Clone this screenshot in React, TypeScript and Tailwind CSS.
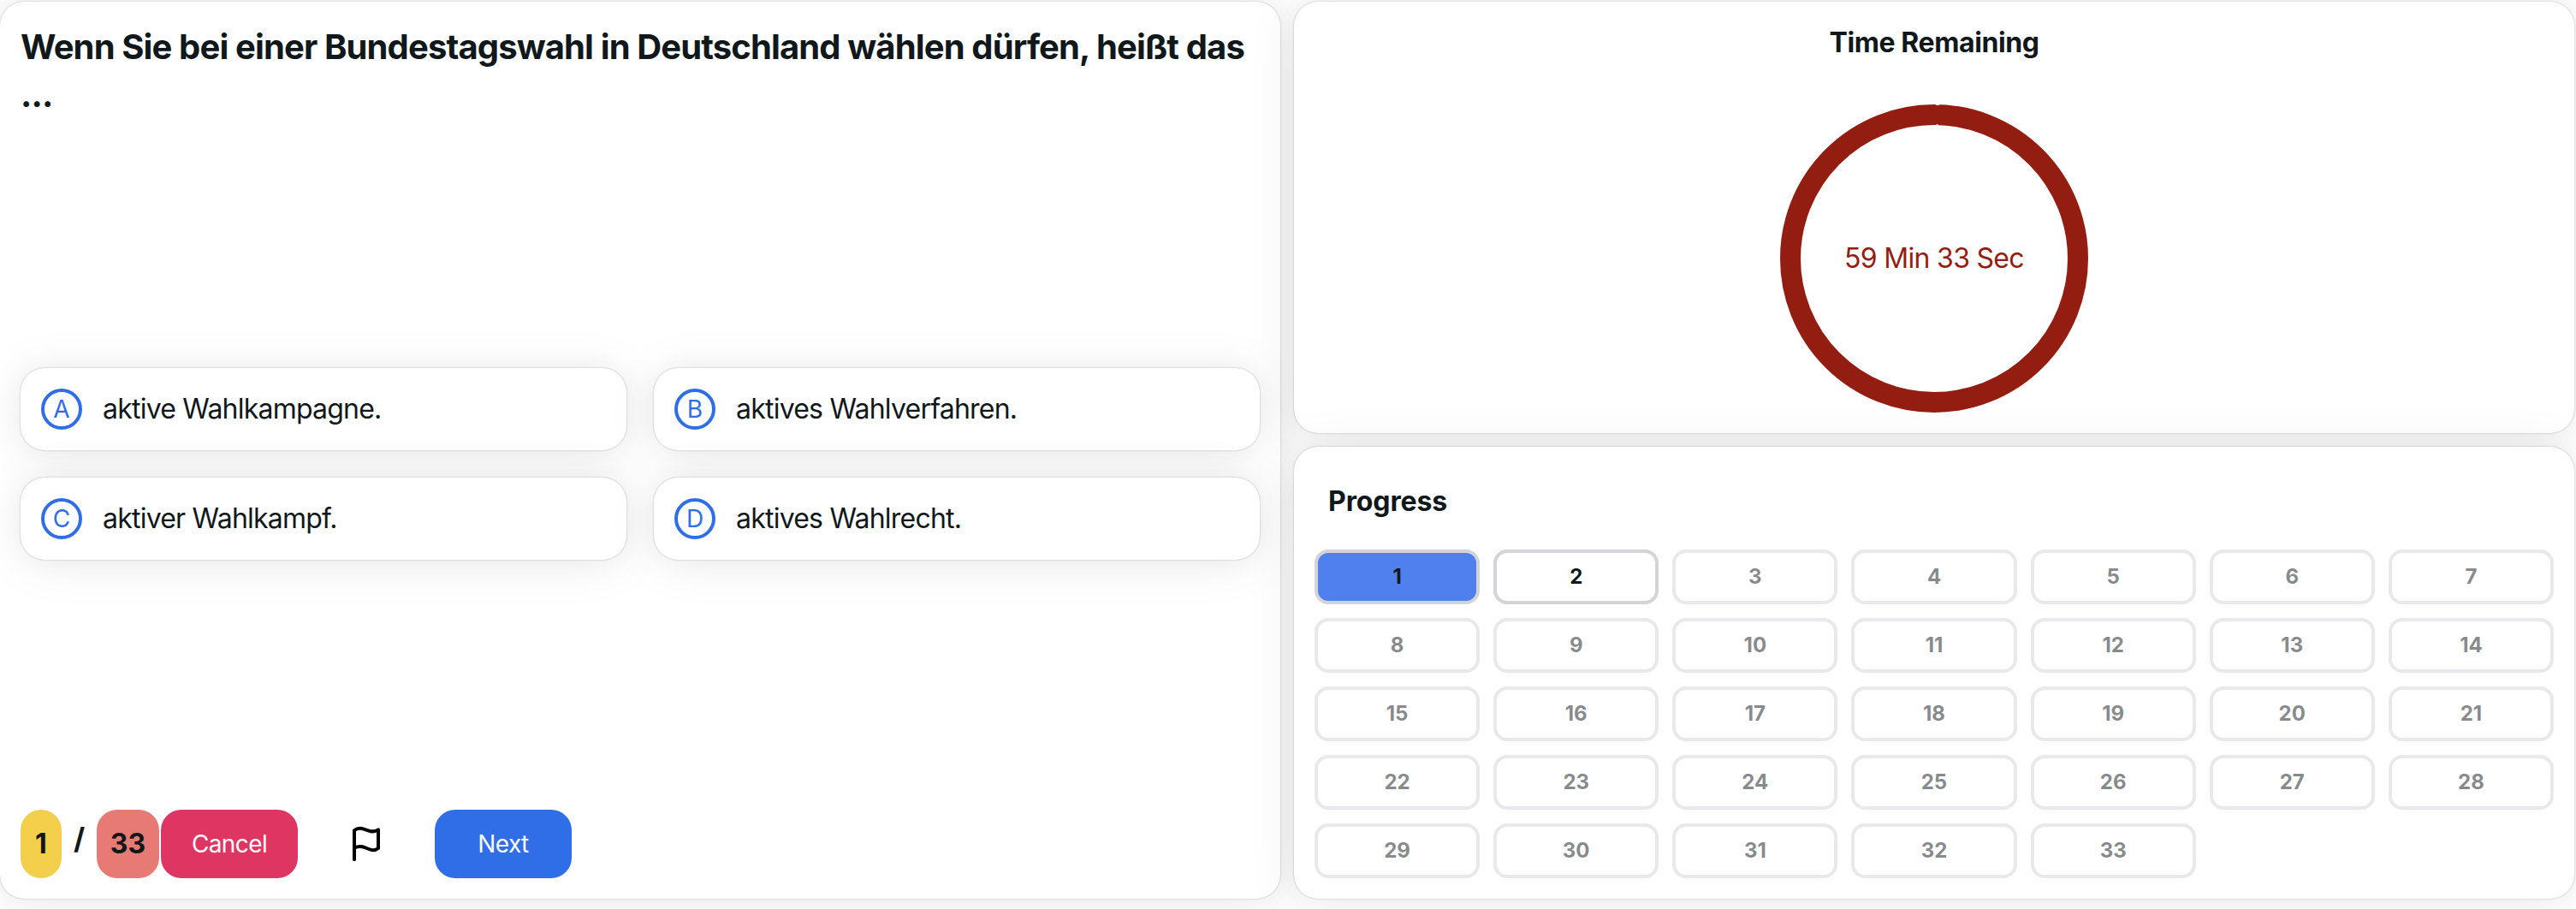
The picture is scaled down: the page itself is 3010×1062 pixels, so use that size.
import React from "react";

const CARD =
  "rounded-[28px] bg-white shadow-[0_0_30px_0_rgb(0_0_0/0.03),0_4px_60px_0_rgb(0_0_0/0.08),0_0_2px_0_rgb(0_0_0/0.3)]";

const answers = [
  { key: "A", text: "aktive Wahlkampagne." },
  { key: "B", text: "aktives Wahlverfahren." },
  { key: "C", text: "aktiver Wahlkampf." },
  { key: "D", text: "aktives Wahlrecht." },
];

const questions = Array.from({ length: 33 }, (_, i) => i + 1);

function Answer({ label, text }: { label: string; text: string }) {
  return (
    <button className={`${CARD} flex h-24 items-center gap-6 px-6 text-left`}>
      <span className="flex size-12 shrink-0 items-center justify-center rounded-full border-4 border-[#2f6ee7] text-[28px] leading-none text-[#2f6ee7]">
        {label}
      </span>
      <span className="text-[32px] leading-12 tracking-[-0.78px]">{text}</span>
    </button>
  );
}

function FlagIcon() {
  return (
    <svg
      viewBox="0 0 48 48"
      className="size-12"
      fill="none"
      stroke="#000"
      strokeWidth="4"
      strokeLinecap="round"
      strokeLinejoin="round"
    >
      <path d="M10 42.3V8C13 5.8 17 5.2 21 6.6L27 8.6C31 10 34.5 9.6 38 7.3V29C35 31.5 31 31.8 27 30L22 28C18 26.6 14 26.8 10 28.7" />
    </svg>
  );
}

function QuestionPanel() {
  return (
    <section className={`${CARD} flex h-[1048px] flex-col p-6`}>
      <h1 className="mt-px mb-[3px] h-[400px] text-[40px] leading-[56px] font-bold tracking-[-0.87px] whitespace-nowrap">
        Wenn Sie bei einer Bundestagswahl in Deutschland wählen dürfen, heißt das
        <br />
        ...
      </h1>
      <div className="grid grid-cols-2 gap-8">
        {answers.map((a) => (
          <Answer key={a.key} label={a.key} text={a.text} />
        ))}
      </div>
      <div className="mt-auto flex h-20 items-center">
        <div className="flex h-20 w-12 items-center justify-center rounded-3xl bg-[#f3cf4b] text-[32px] font-bold">
          1
        </div>
        <div className="flex h-20 w-[41px] justify-center pt-3 text-[34px] leading-11 font-bold">
          /
        </div>
        <div className="flex h-20 w-[73px] items-center justify-center rounded-3xl bg-[#e77a74] text-[32px] font-bold">
          33
        </div>
        <button className="ml-0.5 h-20 w-40 rounded-3xl bg-[#df3562] text-[28px] tracking-[-0.6px] text-white">
          Cancel
        </button>
        <button className="flex h-20 w-40 items-center justify-center">
          <FlagIcon />
        </button>
        <button className="h-20 w-40 rounded-3xl bg-[#2f6ee7] text-[28px] tracking-[-0.6px] text-white">
          Next
        </button>
      </div>
    </section>
  );
}

function TimerPanel() {
  return (
    <section className={`${CARD} flex h-[504px] flex-col items-center pt-6`}>
      <h2 className="text-[32px] leading-12 font-bold tracking-[-0.4px]">Time Remaining</h2>
      <div className="mt-12 grid size-[360px] place-items-center">
        <svg viewBox="0 0 360 360" className="col-start-1 row-start-1 size-[360px]">
          <circle cx="180" cy="180" r="168" fill="none" stroke="#941d12" strokeWidth="24" />
          <path d="M181 0h6l-3 1.2zM181.500 24.300h4l-2-1.300z" fill="#fff" />
        </svg>
        <span className="col-start-1 row-start-1 text-[32px] tracking-[-0.7px] whitespace-nowrap text-[#941d12]">
          59 Min 33 Sec
        </span>
      </div>
    </section>
  );
}

function ProgressPanel() {
  return (
    <section className={`${CARD} h-[528px] px-6 pt-10`}>
      <h2 className="px-4 text-[32px] leading-12 font-bold tracking-[-0.1px]">Progress</h2>
      <div className="mt-8 grid grid-cols-7 gap-4">
        {questions.map((n) => (
          <button
            key={n}
            className={`h-16 rounded-2xl border-4 border-[#d4d4d8] text-2xl font-bold ${n === 1 ? "bg-[#4f80ed]" : ""} ${n > 2 ? "opacity-50" : ""}`}
          >
            {n}
          </button>
        ))}
      </div>
    </section>
  );
}

export default function App() {
  return (
    <main className="grid h-[1062px] w-[3010px] grid-cols-[1496px_1496px] items-start gap-4 overflow-hidden bg-white pt-0.5 font-['Inter',sans-serif] text-[#11181c]">
      <QuestionPanel />
      <div className="flex flex-col gap-4">
        <TimerPanel />
        <ProgressPanel />
      </div>
    </main>
  );
}
